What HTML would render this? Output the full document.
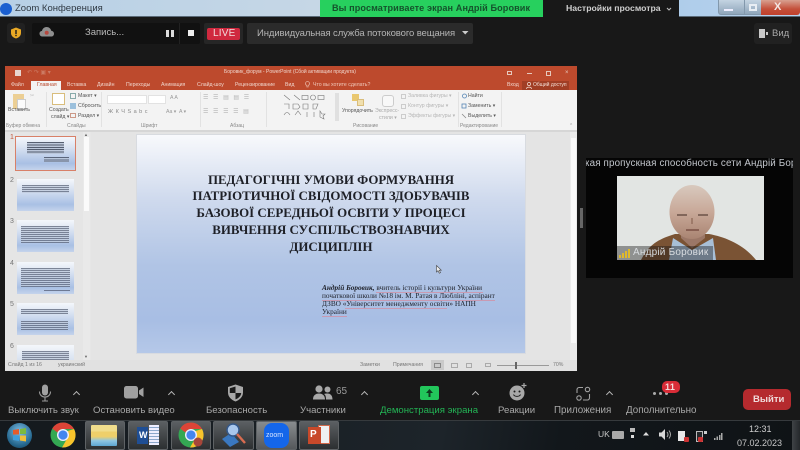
<!DOCTYPE html>
<html><head><meta charset="utf-8"><style>
*{box-sizing:border-box}
html,body{margin:0;padding:0;background:#181818}
#w{width:800px;height:450px;overflow:hidden;background:#181818;position:relative;font-family:"Liberation Sans",sans-serif;filter:blur(.3px)}
.a,.t{position:absolute}
.t{white-space:nowrap;line-height:1}
svg{position:absolute;overflow:visible}
.n{position:absolute;left:10px;font-size:7px;color:#777}
.r{color:#666;font-size:5.2px}
.tb{background:linear-gradient(#5b5f62,#2c2f31);position:absolute;border:1px solid #5e6265;border-radius:2px}
.lb{color:#a8a8a8;font-size:9.6px}
.chev{position:absolute;width:5px;height:5px;border-left:1.3px solid #b5b5b5;border-top:1.3px solid #b5b5b5;transform:rotate(45deg)}
.th{position:absolute;left:17px;width:57px;background:linear-gradient(#f4f7fb,#dbe4f2 30%,#a9c0e4 80%,#c5d3ec)}
.th i{position:absolute;display:block;background:repeating-linear-gradient(#5a6378 0 .8px,#c0cbdc .8px 2px);opacity:.75}
</style></head><body><div id="w">
<!-- Title bar -->
<div class="a" style="left:0;top:0;width:800px;height:16px;background:linear-gradient(90deg,#b7d0e6,#c6d7e6 40%,#a9c8e8 75%,#b8d4ee)"></div>
<div class="a" style="left:0;top:16px;width:800px;height:1px;background:#5a6a78"></div>
<div class="a" style="left:0;top:3px;width:12px;height:12px;border-radius:50%;background:#1a5fd0"></div>
<div class="t" style="left:15px;top:4px;font-size:9.5px;color:#303a44">Zoom Конференция</div>
<div class="a" style="left:320px;top:0;width:223px;height:17px;background:#27d05e"></div>
<div class="t" style="left:332px;top:4px;font-size:9.1px;font-weight:bold;color:#15522c;letter-spacing:.1px">Вы просматриваете экран Андрій Боровик</div>
<div class="a" style="left:543px;top:0;width:136px;height:17px;background:#181818"></div>
<div class="t" style="left:566px;top:4px;font-size:8.7px;font-weight:bold;color:#cfcfcf">Настройки просмотра</div>
<svg style="left:666px;top:7px" width="6" height="4"><path d="M1 1L3 3L5 1" stroke="#bbb" fill="none" stroke-width="1.1"/></svg>
<!-- window buttons -->
<div class="a" style="left:718px;top:0;width:27px;height:15px;background:linear-gradient(#c4d4e2,#8fa6bb);border:1px solid #8298ac;border-top:0;border-radius:0 0 0 3px"></div>
<div class="a" style="left:724px;top:9px;width:9px;height:2px;background:#eef"></div>
<div class="a" style="left:745px;top:0;width:16px;height:15px;background:linear-gradient(#c4d4e2,#8fa6bb);border-bottom:1px solid #8298ac"></div>
<div class="a" style="left:749px;top:4px;width:8px;height:7px;border:2px solid #e8eef4"></div>
<div class="a" style="left:761px;top:0;width:39px;height:15px;background:linear-gradient(#d8a090,#c4503a 60%,#c0402c);border-radius:0 0 3px 0"></div>
<div class="t" style="left:774px;top:2px;font-size:11px;font-weight:bold;color:#f4e8e4">X</div>

<!-- Top Zoom bar -->
<div class="a" style="left:7px;top:23px;width:18px;height:20px;background:#212121;border-radius:3px"></div>
<svg style="left:10px;top:27px" width="12" height="12" viewBox="0 0 12 12"><path d="M6 0.5L11 2.5V6C11 9 8.5 10.8 6 11.5C3.5 10.8 1 9 1 6V2.5Z" fill="#e8a825"/><rect x="5.3" y="3" width="1.4" height="4" fill="#1a1a1a"/><rect x="5.3" y="7.8" width="1.4" height="1.4" fill="#1a1a1a"/></svg>
<div class="a" style="left:32px;top:23px;width:168px;height:21px;background:#111;border-radius:2px"></div>
<svg style="left:39px;top:26px" width="16" height="12" viewBox="0 0 16 12"><path d="M3.5 10.5C1.5 10.5 .5 9 .5 7.6C.5 6 1.7 5 3 4.9C3.5 2.5 5.5 1 7.5 1C10 1 11.8 2.6 12.2 4.8C14 5 15 6.2 15 7.7C15 9.3 13.8 10.5 12.3 10.5Z" fill="#8f8f8f"/><circle cx="7.7" cy="6.8" r="2" fill="#b5483f"/></svg>
<div class="t" style="left:85px;top:28px;font-size:9.5px;color:#b8b8b8">Запись...</div>
<div class="a" style="left:166px;top:30px;width:3px;height:7px;background:#ddd"></div>
<div class="a" style="left:171px;top:30px;width:3px;height:7px;background:#ddd"></div>
<div class="a" style="left:179px;top:23px;width:1px;height:21px;background:#222"></div>
<div class="a" style="left:188px;top:30px;width:6px;height:6px;background:#eee"></div>
<div class="a" style="left:204px;top:23px;width:39px;height:21px;background:#262626;border-radius:2px"></div>
<div class="a" style="left:207px;top:28px;width:33px;height:12px;background:#d0293f;border-radius:2px"></div>
<div class="t" style="left:213px;top:29px;font-size:10px;color:#f2dcdc;letter-spacing:.2px">LIVE</div>
<div class="a" style="left:247px;top:23px;width:226px;height:21px;background:#2b2b2b;border-radius:2px"></div>
<div class="t" style="left:257px;top:29px;font-size:9.5px;color:#b4b4b4;letter-spacing:-.1px">Индивидуальная служба потокового вещания</div>
<svg style="left:462px;top:31px" width="7" height="4"><path d="M0 0H6.5L3.2 3.5Z" fill="#ccc"/></svg>
<div class="a" style="left:754px;top:23px;width:38px;height:21px;background:#212121;border-radius:3px"></div>
<div class="a" style="left:759px;top:29px;width:6px;height:9px;background:#c8c8c8"></div>
<div class="a" style="left:766px;top:32px;width:2px;height:3px;background:#c8c8c8"></div>
<div class="t" style="left:772px;top:29px;font-size:9.5px;color:#a8a8a8">Вид</div>

<!-- PowerPoint window -->
<div class="a" style="left:5px;top:66px;width:572px;height:305px;background:#e6e6e6"></div>
<div class="a" style="left:5px;top:66px;width:572px;height:24px;background:#bd4a2d"></div>
<div class="a" style="left:15px;top:70px;width:6px;height:6px;background:#e8d5cf"></div>
<div class="t" style="left:27px;top:70px;font-size:6px;color:#cc7a63">↶ ↷ ▣ ▾</div>
<div class="t" style="left:224px;top:70px;font-size:5px;color:#efd5cc">Боровик_форум - PowerPoint (Сбой активации продукта)</div>
<div class="a" style="left:507px;top:71px;width:5px;height:4px;border:1px solid #e6c8bc"></div>
<div class="a" style="left:527px;top:73px;width:5px;height:1px;background:#e6c8bc"></div>
<div class="a" style="left:546px;top:71px;width:5px;height:5px;border:1px solid #e6c8bc"></div>
<div class="t" style="left:565px;top:69.5px;font-size:6px;color:#e6c8bc">×</div>
<div class="a" style="left:31px;top:80.5px;width:30px;height:10px;background:#f3f3f3"></div>
<div class="t" style="left:11px;top:82.5px;font-size:5.2px;color:#f0d5cc">Файл</div>
<div class="t" style="left:37px;top:82.5px;font-size:5.2px;color:#b9482c">Главная</div>
<div class="t" style="left:67px;top:82.5px;font-size:5.2px;color:#f0d5cc">Вставка</div>
<div class="t" style="left:97px;top:82.5px;font-size:5.2px;color:#f0d5cc">Дизайн</div>
<div class="t" style="left:126px;top:82.5px;font-size:5.2px;color:#f0d5cc">Переходы</div>
<div class="t" style="left:161px;top:82.5px;font-size:5.2px;color:#f0d5cc">Анимация</div>
<div class="t" style="left:197px;top:82.5px;font-size:5.2px;color:#f0d5cc">Слайд-шоу</div>
<div class="t" style="left:235px;top:82.5px;font-size:5.2px;color:#f0d5cc">Рецензирование</div>
<div class="t" style="left:285px;top:82.5px;font-size:5.2px;color:#f0d5cc">Вид</div>
<svg style="left:305px;top:81px" width="5" height="7"><path d="M2.5 .5A2 2 0 0 1 3.8 4V5H1.2V4A2 2 0 0 1 2.5 .5ZM1.5 6H3.5" fill="none" stroke="#f0c8ba" stroke-width=".6"/></svg>
<div class="t" style="left:313px;top:82.5px;font-size:5.2px;color:#f0c8ba">Что вы хотите сделать?</div>
<div class="t" style="left:507px;top:82.5px;font-size:5.2px;color:#f0d5cc">Вход</div>
<div class="a" style="left:522px;top:81px;width:47px;height:9px;background:#a13e25"></div>
<svg style="left:526px;top:81.5px" width="6" height="7"><circle cx="3" cy="2" r="1.6" fill="none" stroke="#f3ded6" stroke-width=".7"/><path d="M.5 7C.5 4.5 5.5 4.5 5.5 7" fill="none" stroke="#f3ded6" stroke-width=".7"/></svg>
<div class="t" style="left:533px;top:82.5px;font-size:5px;color:#f3ded6">Общий доступ</div>

<!-- Ribbon -->
<div class="a" style="left:5px;top:90px;width:572px;height:40px;background:#f3f3f3"></div>
<div class="a" style="left:5px;top:130px;width:572px;height:2px;background:#d6d6d6"></div>
<div class="a" style="left:13px;top:94px;width:11px;height:15px;background:#eccf94"></div>
<div class="a" style="left:17px;top:99px;width:9px;height:11px;background:#fbfbfb;border:1px solid #ccc"></div>
<div class="t r" style="left:8px;top:108px;color:#555">Вставить</div>
<div class="t r" style="left:30px;top:94px;color:#bbb">✂</div>
<div class="a" style="left:52px;top:93px;width:13px;height:12px;background:#fff;border:1px solid #d9bd7c"></div>
<div class="t r" style="left:49px;top:108px;color:#555">Создать</div>
<div class="t r" style="left:51px;top:115px;color:#555">слайд ▾</div>
<div class="a" style="left:70px;top:93px;width:6px;height:6px;border:1px solid #8aa"></div>
<div class="t r" style="left:78px;top:93.5px;color:#555">Макет ▾</div>
<div class="a" style="left:70px;top:103px;width:6px;height:6px;background:#9cc0dc"></div>
<div class="t r" style="left:78px;top:103.5px;color:#555">Сбросить</div>
<div class="t r" style="left:78px;top:113.5px;color:#555">Раздел ▾</div>
<div class="a" style="left:70px;top:113px;width:6px;height:5px;border:1px solid #c98"></div>
<div class="a" style="left:107px;top:95px;width:40px;height:9px;background:#fff;border:1px solid #e2e2e2"></div>
<div class="a" style="left:148px;top:95px;width:18px;height:9px;background:#fff;border:1px solid #e2e2e2"></div>
<div class="t r" style="left:170px;top:96px;color:#999">A A</div>
<div class="t r" style="left:108px;top:109.5px;color:#888;font-size:5.5px;letter-spacing:2.5px">ЖКЧSabc</div>
<div class="t r" style="left:166px;top:109.5px;color:#999">Aa ▾&nbsp; A ▾</div>
<div class="t r" style="left:203px;top:95px;color:#b5b5b5;font-size:6px;letter-spacing:1.5px">☰ ☰ ▤ ▤ ☰</div>
<div class="t r" style="left:203px;top:109px;color:#b5b5b5;font-size:6px;letter-spacing:1.5px">☰ ☰ ☰ ☰ ▤</div>
<div class="a" style="left:266px;top:92px;width:1px;height:35px;background:#e2e2e2"></div>
<div class="a" style="left:101px;top:92px;width:1px;height:35px;background:#e2e2e2"></div>
<div class="a" style="left:46px;top:92px;width:1px;height:35px;background:#e2e2e2"></div>
<div class="a" style="left:200px;top:92px;width:1px;height:35px;background:#e2e2e2"></div>
<div class="a" style="left:458px;top:92px;width:1px;height:35px;background:#e2e2e2"></div>
<div class="a" style="left:501px;top:92px;width:1px;height:35px;background:#e2e2e2"></div>
<div class="t" style="left:569px;top:124px;font-size:5px;color:#888">⌃</div>
<svg style="left:283px;top:94px" width="50" height="28" viewBox="0 0 50 28" fill="none" stroke="#777" stroke-width=".6"><path d="M1 1L7 6M11 1L17 6"/><rect x="19" y="1.5" width="6" height="4"/><circle cx="30" cy="3.5" r="2.5"/><rect x="35" y="1.5" width="6" height="4"/><path d="M1 10H6V15M10 10H15L17 13L15 15H10ZM20 10H25V15H20ZM30 10H35L33 15H30ZM1 21Q4 16 7 21M12 21L15 17L18 21M24 18V23M31 18V23M37 17L39 20L42 20L40 22L41 25L37 23Z"/></svg>
<div class="a" style="left:335px;top:93px;width:4px;height:28px;background:#e0e0e0"></div>
<div class="a" style="left:352px;top:94px;width:7px;height:7px;background:#e9c76f"></div>
<div class="a" style="left:357px;top:99px;width:7px;height:7px;background:#f0dfae;border:1px solid #d9bd7c"></div>
<div class="t r" style="left:342px;top:109px;color:#555">Упорядочить</div>
<div class="a" style="left:382px;top:95px;width:12px;height:12px;background:#f8f8f8;border:1px solid #ccc;border-radius:3px"></div>
<div class="t r" style="left:375px;top:109px;color:#aaa">Экспресс-</div>
<div class="t r" style="left:379px;top:116px;color:#aaa">стили ▾</div>
<div class="t r" style="left:408px;top:94px;color:#b5b5b5">Заливка фигуры ▾</div>
<div class="t r" style="left:408px;top:104px;color:#b5b5b5">Контур фигуры ▾</div>
<div class="t r" style="left:408px;top:114px;color:#b5b5b5">Эффекты фигуры ▾</div>
<div class="a" style="left:401px;top:94px;width:5px;height:5px;border:1px solid #ccc"></div>
<div class="a" style="left:401px;top:104px;width:5px;height:5px;border:1px solid #ccc"></div>
<div class="a" style="left:401px;top:114px;width:5px;height:5px;border:1px solid #ccc"></div>
<div class="t r" style="left:468px;top:94px;color:#555">Найти</div>
<div class="t r" style="left:468px;top:104px;color:#555">Заменить ▾</div>
<div class="t r" style="left:468px;top:114px;color:#555">Выделить ▾</div>
<svg style="left:461px;top:93px" width="6" height="26" fill="none" stroke="#5585b5" stroke-width=".8"><circle cx="3.5" cy="3" r="2"/><rect x="1" y="11" width="4" height="4"/><path d="M1 21L5 25" stroke="#888"/></svg>
<div class="t r" style="left:6px;top:124px;color:#888;font-size:5px">Буфер обмена</div>
<div class="t r" style="left:67px;top:124px;color:#888;font-size:5px">Слайды</div>
<div class="t r" style="left:141px;top:124px;color:#888;font-size:5px">Шрифт</div>
<div class="t r" style="left:230px;top:124px;color:#888;font-size:5px">Абзац</div>
<div class="t r" style="left:353px;top:124px;color:#888;font-size:5px">Рисование</div>
<div class="t r" style="left:460px;top:124px;color:#888;font-size:5px">Редактирование</div>

<!-- Thumbnail panel -->
<div class="a" style="left:5px;top:132px;width:78px;height:228px;background:#e5e5e5"></div>
<div class="n" style="top:134px;color:#c4553a">1</div>
<div class="a" style="left:15px;top:136px;width:61px;height:35px;border:1.5px solid #d88068;background:linear-gradient(#f4f7fb,#dbe4f2 30%,#a9c0e4 80%,#c5d3ec)">
<i style="position:absolute;left:11px;right:11px;top:5px;height:12px;background:repeating-linear-gradient(#3f4759 0 1px,#b8c3d6 1px 2.4px);opacity:.85"></i>
<i style="position:absolute;left:28px;right:6px;top:20px;height:5px;background:repeating-linear-gradient(#4a5368 0 .8px,#b9c6da .8px 1.8px);opacity:.85"></i></div>
<div class="n" style="top:177px">2</div>
<div class="th" style="top:179px;height:32px"><i style="left:5px;right:5px;top:6px;height:8px"></i></div>
<div class="n" style="top:218px">3</div>
<div class="th" style="top:220px;height:32px"><i style="left:4px;right:5px;top:6px;height:17px"></i></div>
<div class="n" style="top:260px">4</div>
<div class="th" style="top:262px;height:32px"><i style="left:4px;right:4px;top:6px;height:19px"></i><i style="left:27px;right:4px;top:28px;height:1px;background:#55607a"></i></div>
<div class="n" style="top:301px">5</div>
<div class="th" style="top:303px;height:32px"><i style="left:4px;right:6px;top:6px;height:5px"></i><i style="left:4px;right:6px;top:18px;height:9px"></i></div>
<div class="n" style="top:343px">6</div>
<div class="th" style="top:345px;height:15px;background:linear-gradient(#f4f7fb,#d8e2f0);overflow:hidden"><i style="left:5px;right:5px;top:6px;height:9px"></i></div>
<div class="a" style="left:83px;top:132px;width:7px;height:228px;background:#e9e9e9"></div>
<div class="a" style="left:84px;top:137px;width:5px;height:74px;background:#fafafa"></div>
<div class="t" style="left:84px;top:133px;font-size:4px;color:#666">▲</div>
<div class="t" style="left:84px;top:355px;font-size:4px;color:#666">▼</div>

<!-- Editing area -->
<div class="a" style="left:91px;top:132px;width:486px;height:228px;background:#e4e4e4"></div>
<div class="a" style="left:136px;top:134px;width:390px;height:220px;background:linear-gradient(#f8f9fc,#ced9ed 30%,#b0c4e5 60%,#a8bee4 85%,#b5c8e8);border:1px solid #d8dbe0"></div>
<div class="a" style="left:175px;top:171.5px;width:312px;text-align:center;font-family:'Liberation Serif',serif;font-weight:bold;font-size:12.9px;line-height:16.8px;color:#1e2027;white-space:nowrap">ПЕДАГОГІЧНІ УМОВИ ФОРМУВАННЯ<br>ПАТРІОТИЧНОЇ СВІДОМОСТІ ЗДОБУВАЧІВ<br>БАЗОВОЇ СЕРЕДНЬОЇ ОСВІТИ У ПРОЦЕСІ<br>ВИВЧЕННЯ СУСПІЛЬСТВОЗНАВЧИХ<br>ДИСЦИПЛІН</div>
<div class="a" style="left:322px;top:284px;width:190px;font-family:'Liberation Serif',serif;font-size:7.3px;line-height:8px;color:#20232c;white-space:nowrap"><b><i>Андрій Боровик,</i></b> вчитель історії і культури України<br>початкової школи №18 ім. М. Ратая в Любліні, аспірант<br>ДЗВО «Університет менеджменту освіти» НАПН<br>України</div>
<div class="a" style="left:376px;top:291.5px;width:107px;height:1px;background:#d58a9c;opacity:.7"></div>
<div class="a" style="left:322px;top:299.5px;width:173px;height:1px;background:#d58a9c;opacity:.7"></div>
<div class="a" style="left:345px;top:307.5px;width:102px;height:1px;background:#d58a9c;opacity:.7"></div>
<div class="a" style="left:322px;top:315.5px;width:25px;height:1px;background:#d58a9c;opacity:.7"></div>
<svg style="left:436px;top:265px" width="6" height="9"><path d="M.5 .5V7L2 5.6L3.3 8.2L4.5 7.6L3.3 5.2H5.3Z" fill="#eee" stroke="#444" stroke-width=".6"/></svg>
<div class="a" style="left:570px;top:132px;width:7px;height:228px;background:#ececec"></div>
<div class="a" style="left:571px;top:138px;width:5px;height:205px;background:#fafafa"></div>

<!-- PPT status -->
<div class="a" style="left:5px;top:360px;width:572px;height:11px;background:#e1e1e1"></div>
<div class="t r" style="left:8px;top:363px;color:#777">Слайд 1 из 16</div>
<div class="t r" style="left:58px;top:363px;color:#777">украинский</div>
<div class="t r" style="left:360px;top:363px;color:#777">Заметки</div>
<div class="t r" style="left:393px;top:363px;color:#777">Примечания</div>
<div class="a" style="left:431px;top:360px;width:13px;height:10px;background:#cacaca"></div>
<div class="a" style="left:434px;top:363px;width:7px;height:5px;border:1px solid #888"></div>
<div class="a" style="left:451px;top:363px;width:7px;height:5px;border:1px solid #aaa"></div>
<div class="a" style="left:466px;top:363px;width:6px;height:5px;border:1px solid #aaa"></div>
<div class="a" style="left:485px;top:363px;width:6px;height:4px;border:1px solid #aaa"></div>
<div class="a" style="left:497px;top:365px;width:52px;height:1px;background:#999"></div>
<div class="a" style="left:515px;top:362px;width:2px;height:7px;background:#666"></div>
<div class="t r" style="left:553px;top:363px;color:#777">70%</div>

<!-- Splitter + Video panel -->
<div class="a" style="left:580px;top:208px;width:3px;height:20px;background:#666"></div>
<div class="a" style="left:586px;top:158px;width:207px;height:120px;background:#050505"></div>
<div class="a" style="left:586px;top:158px;width:207px;height:14px;overflow:hidden"><div class="t" style="left:-1px;top:1px;font-size:9.8px;color:#c2c6cc;letter-spacing:.14px">кая пропускная способность сети Андрій Боровик</div></div>
<div class="a" style="left:617px;top:176px;width:147px;height:84px;background:#dfe3e5;overflow:hidden">
<svg style="left:0;top:0" width="147" height="84" viewBox="0 0 147 84">
<defs><linearGradient id="f" x1="0" y1="0" x2="0" y2="1"><stop offset="0" stop-color="#d8c9be"/><stop offset=".5" stop-color="#c8a898"/><stop offset="1" stop-color="#a98472"/></linearGradient></defs>
<rect width="147" height="84" fill="#e2e5e3"/>
<path d="M24 84C32 68 42 63 58 58H92C108 61 126 68 139 84Z" fill="#7a5334"/>
<path d="M56 62L75 74L96 62L99 84H52Z" fill="#a8bfd6"/>
<path d="M64 62L75 72L88 62V56H64Z" fill="#9b7767"/>
<ellipse cx="75" cy="36" rx="22.5" ry="27" fill="url(#f)"/>
<path d="M60 39H70M81 39H91" stroke="#6c5348" stroke-width="1.6"/>
<path d="M75 42V48" stroke="#94705f" stroke-width="1.5"/>
<path d="M69 54H82" stroke="#7a4f44" stroke-width="1.5"/>
</svg>
<div class="a" style="left:0;top:70px;width:96px;height:14px;background:rgba(20,20,20,.4)"></div>
<div class="a" style="left:2px;top:79px;width:2px;height:3px;background:#e0b92a"></div>
<div class="a" style="left:5px;top:77px;width:2px;height:5px;background:#e0b92a"></div>
<div class="a" style="left:8px;top:75px;width:2px;height:7px;background:#e0b92a"></div>
<div class="a" style="left:11px;top:73px;width:2px;height:9px;background:#e0b92a"></div>
<div class="t" style="left:16px;top:72px;font-size:10px;color:#d8dce0;letter-spacing:.2px">Андрій Боровик</div>
</div>

<!-- Bottom toolbar -->
<svg style="left:38px;top:384px" width="14" height="18" viewBox="0 0 14 18"><rect x="4" y="0.5" width="6" height="11" rx="3" fill="#a0a0a0"/><path d="M1.5 7.5C1.5 11 4 13 7 13C10 13 12.5 11 12.5 7.5M7 13V16.5M4 17H10" stroke="#9a9a9a" stroke-width="1.1" fill="none"/></svg>
<div class="chev" style="left:74px;top:392px"></div>
<div class="t lb" style="left:8px;top:406px">Выключить звук</div>
<svg style="left:124px;top:386px" width="20" height="13" viewBox="0 0 20 13"><rect x="0" y="0" width="14" height="12.5" rx="2.5" fill="#a0a0a0"/><path d="M15 4.5L19.5 1.5V11L15 8Z" fill="#a0a0a0"/></svg>
<div class="chev" style="left:169px;top:392px"></div>
<div class="t lb" style="left:93px;top:406px">Остановить видео</div>
<svg style="left:227px;top:384px" width="17" height="18" viewBox="0 0 17 18"><path d="M8.5 .5L16 3V8.5C16 13 12.5 16 8.5 17.5C4.5 16 1 13 1 8.5V3Z" fill="#a8a8a8"/><path d="M8.5 2.5V9H2.8V4.2ZM8.5 9H14.2C14 12 11.5 14.2 8.5 15.4Z" fill="#1a1a1a"/></svg>
<div class="t lb" style="left:206px;top:406px">Безопасность</div>
<svg style="left:313px;top:385px" width="20" height="15" viewBox="0 0 20 15"><circle cx="6" cy="4" r="3.6" fill="#a8a8a8"/><circle cx="14.5" cy="4.5" r="3" fill="#a8a8a8"/><path d="M0 14.5C0 10 3 8.5 6 8.5C9 8.5 12 10 12 14.5ZM13 14.5C13 11.5 12.5 10 11 9C12 8.5 13.5 8.5 14.5 8.5C17 8.5 19.5 10 19.5 14.5Z" fill="#a8a8a8"/></svg>
<div class="t" style="left:336px;top:387px;font-size:10px;color:#9a9a9a">65</div>
<div class="chev" style="left:362px;top:392px"></div>
<div class="t lb" style="left:300px;top:406px">Участники</div>
<div class="a" style="left:420px;top:386px;width:19px;height:14px;background:#22c65b;border-radius:2px"></div>
<svg style="left:425px;top:389px" width="9" height="8" viewBox="0 0 9 8"><path d="M4.5 0L8 4H5.5V8H3.5V4H1Z" fill="#0f3a1f"/></svg>
<div class="chev" style="left:473px;top:392px"></div>
<div class="t lb" style="left:380px;top:406px;color:#23b455">Демонстрация экрана</div>
<svg style="left:509px;top:383px" width="19" height="18" viewBox="0 0 19 18"><circle cx="8" cy="10" r="7.5" fill="#a8a8a8"/><circle cx="5.5" cy="8.5" r="1" fill="#1a1a1a"/><circle cx="10.5" cy="8.5" r="1" fill="#1a1a1a"/><path d="M4.5 11.5C5.5 14 10.5 14 11.5 11.5" stroke="#1a1a1a" fill="none" stroke-width="1"/><path d="M15 0V5M12.5 2.5H17.5" stroke="#a8a8a8" stroke-width="1.2"/></svg>
<div class="t lb" style="left:498px;top:406px">Реакции</div>
<svg style="left:576px;top:386px" width="15" height="15" viewBox="0 0 15 15" fill="none" stroke="#a0a0a0" stroke-width="1.1"><path d="M7 1.5H3C2 1.5 1 2.5 1 3.5V7M13.5 8V12C13.5 13 12.5 14 11.5 14H7"/><circle cx="11.5" cy="3.5" r="2.2"/><circle cx="3" cy="12" r="2.2"/></svg>
<div class="chev" style="left:607px;top:392px"></div>
<div class="t lb" style="left:554px;top:406px;font-size:9.8px">Приложения</div>
<div class="a" style="left:653px;top:392px;width:3px;height:3px;border-radius:50%;background:#aaa"></div>
<div class="a" style="left:659px;top:392px;width:3px;height:3px;border-radius:50%;background:#aaa"></div>
<div class="a" style="left:665px;top:392px;width:3px;height:3px;border-radius:50%;background:#aaa"></div>
<div class="a" style="left:662px;top:381px;width:18px;height:12px;background:#d92c37;border-radius:5px"></div>
<div class="t" style="left:665px;top:382.5px;font-size:9px;font-weight:bold;color:#f3dada;letter-spacing:.4px">11</div>
<div class="t lb" style="left:626px;top:406px;font-size:9.8px">Дополнительно</div>
<div class="a" style="left:743px;top:389px;width:48px;height:21px;background:#b52a2e;border-radius:5px"></div>
<div class="t" style="left:753px;top:395px;font-size:9.5px;font-weight:bold;color:#f0dcdc">Выйти</div>

<!-- Taskbar -->
<div class="a" style="left:0;top:420px;width:800px;height:30px;background:linear-gradient(100deg,#14191d,#1d242a 55%,#12171b 70%,#0f1316)"></div>
<div class="a" style="left:0;top:420px;width:800px;height:1px;background:#363a3d"></div>
<div class="a" style="left:7px;top:423px;width:25px;height:25px;border-radius:50%;background:radial-gradient(circle at 50% 35%,#7fc0e8,#26688f 65%,#123a55)"></div>
<svg style="left:12px;top:428px" width="15" height="14" viewBox="0 0 15 14"><path d="M1 2L7 1V6.5H1Z" fill="#e55b2a"/><path d="M8 1L14 0V6H8Z" fill="#7cba3f"/><path d="M1 7.5H7V13L1 12Z" fill="#3c9ddb"/><path d="M8 7.5H14V13.5L8 12.5Z" fill="#f0bf3a"/></svg>
<svg style="left:50px;top:422px" width="26" height="26" viewBox="0 0 26 26"><circle cx="13" cy="13" r="12.5" fill="#34a853"/><path d="M13 .5A12.5 12.5 0 0 1 24 7H13A6 6 0 0 0 7.5 10.5L2.2 6.6A12.5 12.5 0 0 1 13 .5Z" fill="#dc4437"/><path d="M24 7A12.5 12.5 0 0 1 12 25.5L18 15A6 6 0 0 0 17.5 9Z" fill="#f8c42c"/><circle cx="13" cy="13" r="6" fill="#eef"/><circle cx="13" cy="13" r="4.6" fill="#4486ef"/></svg>
<div class="tb" style="left:85px;top:421px;width:40px;height:29px"></div>
<div class="a" style="left:91px;top:425px;width:26px;height:21px;background:linear-gradient(#f0dd8c 0 30%,#eecf6a 30% 55%,#8cc6e4 75%,#5ea6d0);border-radius:1px"></div>
<div class="tb" style="left:128px;top:421px;width:40px;height:29px"></div>
<div class="a" style="left:137px;top:427px;width:11px;height:17px;background:#1f4e94"></div>
<div class="t" style="left:139px;top:431px;font-size:9px;font-weight:bold;color:#fff">W</div>
<div class="a" style="left:149px;top:425px;width:10px;height:20px;background:repeating-linear-gradient(#eef 0 2px,#8ba7cc 2px 3px)"></div>
<div class="tb" style="left:171px;top:421px;width:40px;height:29px"></div>
<svg style="left:178px;top:422px" width="26" height="26" viewBox="0 0 26 26"><circle cx="13" cy="13" r="12.5" fill="#34a853"/><path d="M13 .5A12.5 12.5 0 0 1 24 7H13A6 6 0 0 0 7.5 10.5L2.2 6.6A12.5 12.5 0 0 1 13 .5Z" fill="#dc4437"/><path d="M24 7A12.5 12.5 0 0 1 12 25.5L18 15A6 6 0 0 0 17.5 9Z" fill="#f8c42c"/><circle cx="13" cy="13" r="6" fill="#eef"/><circle cx="13" cy="13" r="4.6" fill="#4486ef"/><circle cx="20" cy="20" r="4.5" fill="#a7463a"/></svg>
<div class="tb" style="left:213px;top:421px;width:41px;height:29px"></div>
<svg style="left:221px;top:422px" width="26" height="26" viewBox="0 0 26 26"><path d="M1 17L10 11L18 20L9 25Z" fill="#3a78c0"/><circle cx="12" cy="8" r="6" fill="#a9c7ec" stroke="#34588a" stroke-width="1.5"/><path d="M16 12L24 21" stroke="#d86c50" stroke-width="2.4"/></svg>
<div class="tb" style="left:256px;top:421px;width:41px;height:29px;background:linear-gradient(#888c8f,#55585b)"></div>
<div class="a" style="left:264px;top:423px;width:25px;height:25px;border-radius:8px;background:#1466ea"></div>
<div class="t" style="left:266px;top:432px;font-size:7px;color:#d6e4ff">zoom</div>
<div class="tb" style="left:299px;top:421px;width:40px;height:29px"></div>
<div class="a" style="left:318px;top:425px;width:12px;height:19px;background:#eef0f2;border:1px solid #d06a4c"></div>
<div class="a" style="left:308px;top:427px;width:13px;height:17px;background:#c8492a"></div>
<div class="t" style="left:310px;top:430px;font-size:10px;font-weight:bold;color:#fff">P</div>

<div class="t" style="left:598px;top:430px;font-size:8.5px;color:#c4c4c4">UK</div>
<div class="a" style="left:612px;top:431px;width:12px;height:8px;background:#a9a9a9;border-radius:1px"></div>
<div class="a" style="left:630px;top:428px;width:5px;height:4px;background:#bbb"></div>
<div class="a" style="left:631px;top:435px;width:3px;height:3px;background:#ddd"></div>
<svg style="left:643px;top:432px" width="6" height="4"><path d="M3 0L6 3.5H0Z" fill="#ddd"/></svg>
<svg style="left:659px;top:429px" width="13" height="11"><path d="M0 3.5H2.5L6 0V11L2.5 7.5H0Z" fill="#d8d8d8"/><path d="M8 3Q10 5.5 8 8M10 1.5Q13 5.5 10 9.5" stroke="#aaa" fill="none"/></svg>
<div class="a" style="left:678px;top:431px;width:7px;height:10px;background:#e8e8e8"></div>
<div class="a" style="left:684px;top:437px;width:5px;height:5px;background:#c33;border-radius:1px"></div>
<div class="a" style="left:696px;top:431px;width:7px;height:11px;background:#26292c;border:1px solid #bbb"></div>
<div class="a" style="left:698px;top:437px;width:5px;height:5px;background:#c33;border-radius:1px"></div>
<div class="a" style="left:704px;top:431px;width:3px;height:3px;background:#ccc"></div>
<svg style="left:714px;top:432px" width="9" height="8"><path d="M0 8V6H1.5V8ZM2.5 8V4.5H4V8ZM5 8V3H6.5V8ZM7 8V1H8.5V8Z" fill="#a9a9a9"/></svg>
<div class="t" style="left:749px;top:424.5px;font-size:9px;color:#cfcfcf">12:31</div>
<div class="t" style="left:737px;top:438.5px;font-size:9px;color:#c8c8c8">07.02.2023</div>
<div class="a" style="left:792px;top:421px;width:8px;height:29px;background:linear-gradient(90deg,#3f4346,#25282b)"></div>
</div></body></html>
